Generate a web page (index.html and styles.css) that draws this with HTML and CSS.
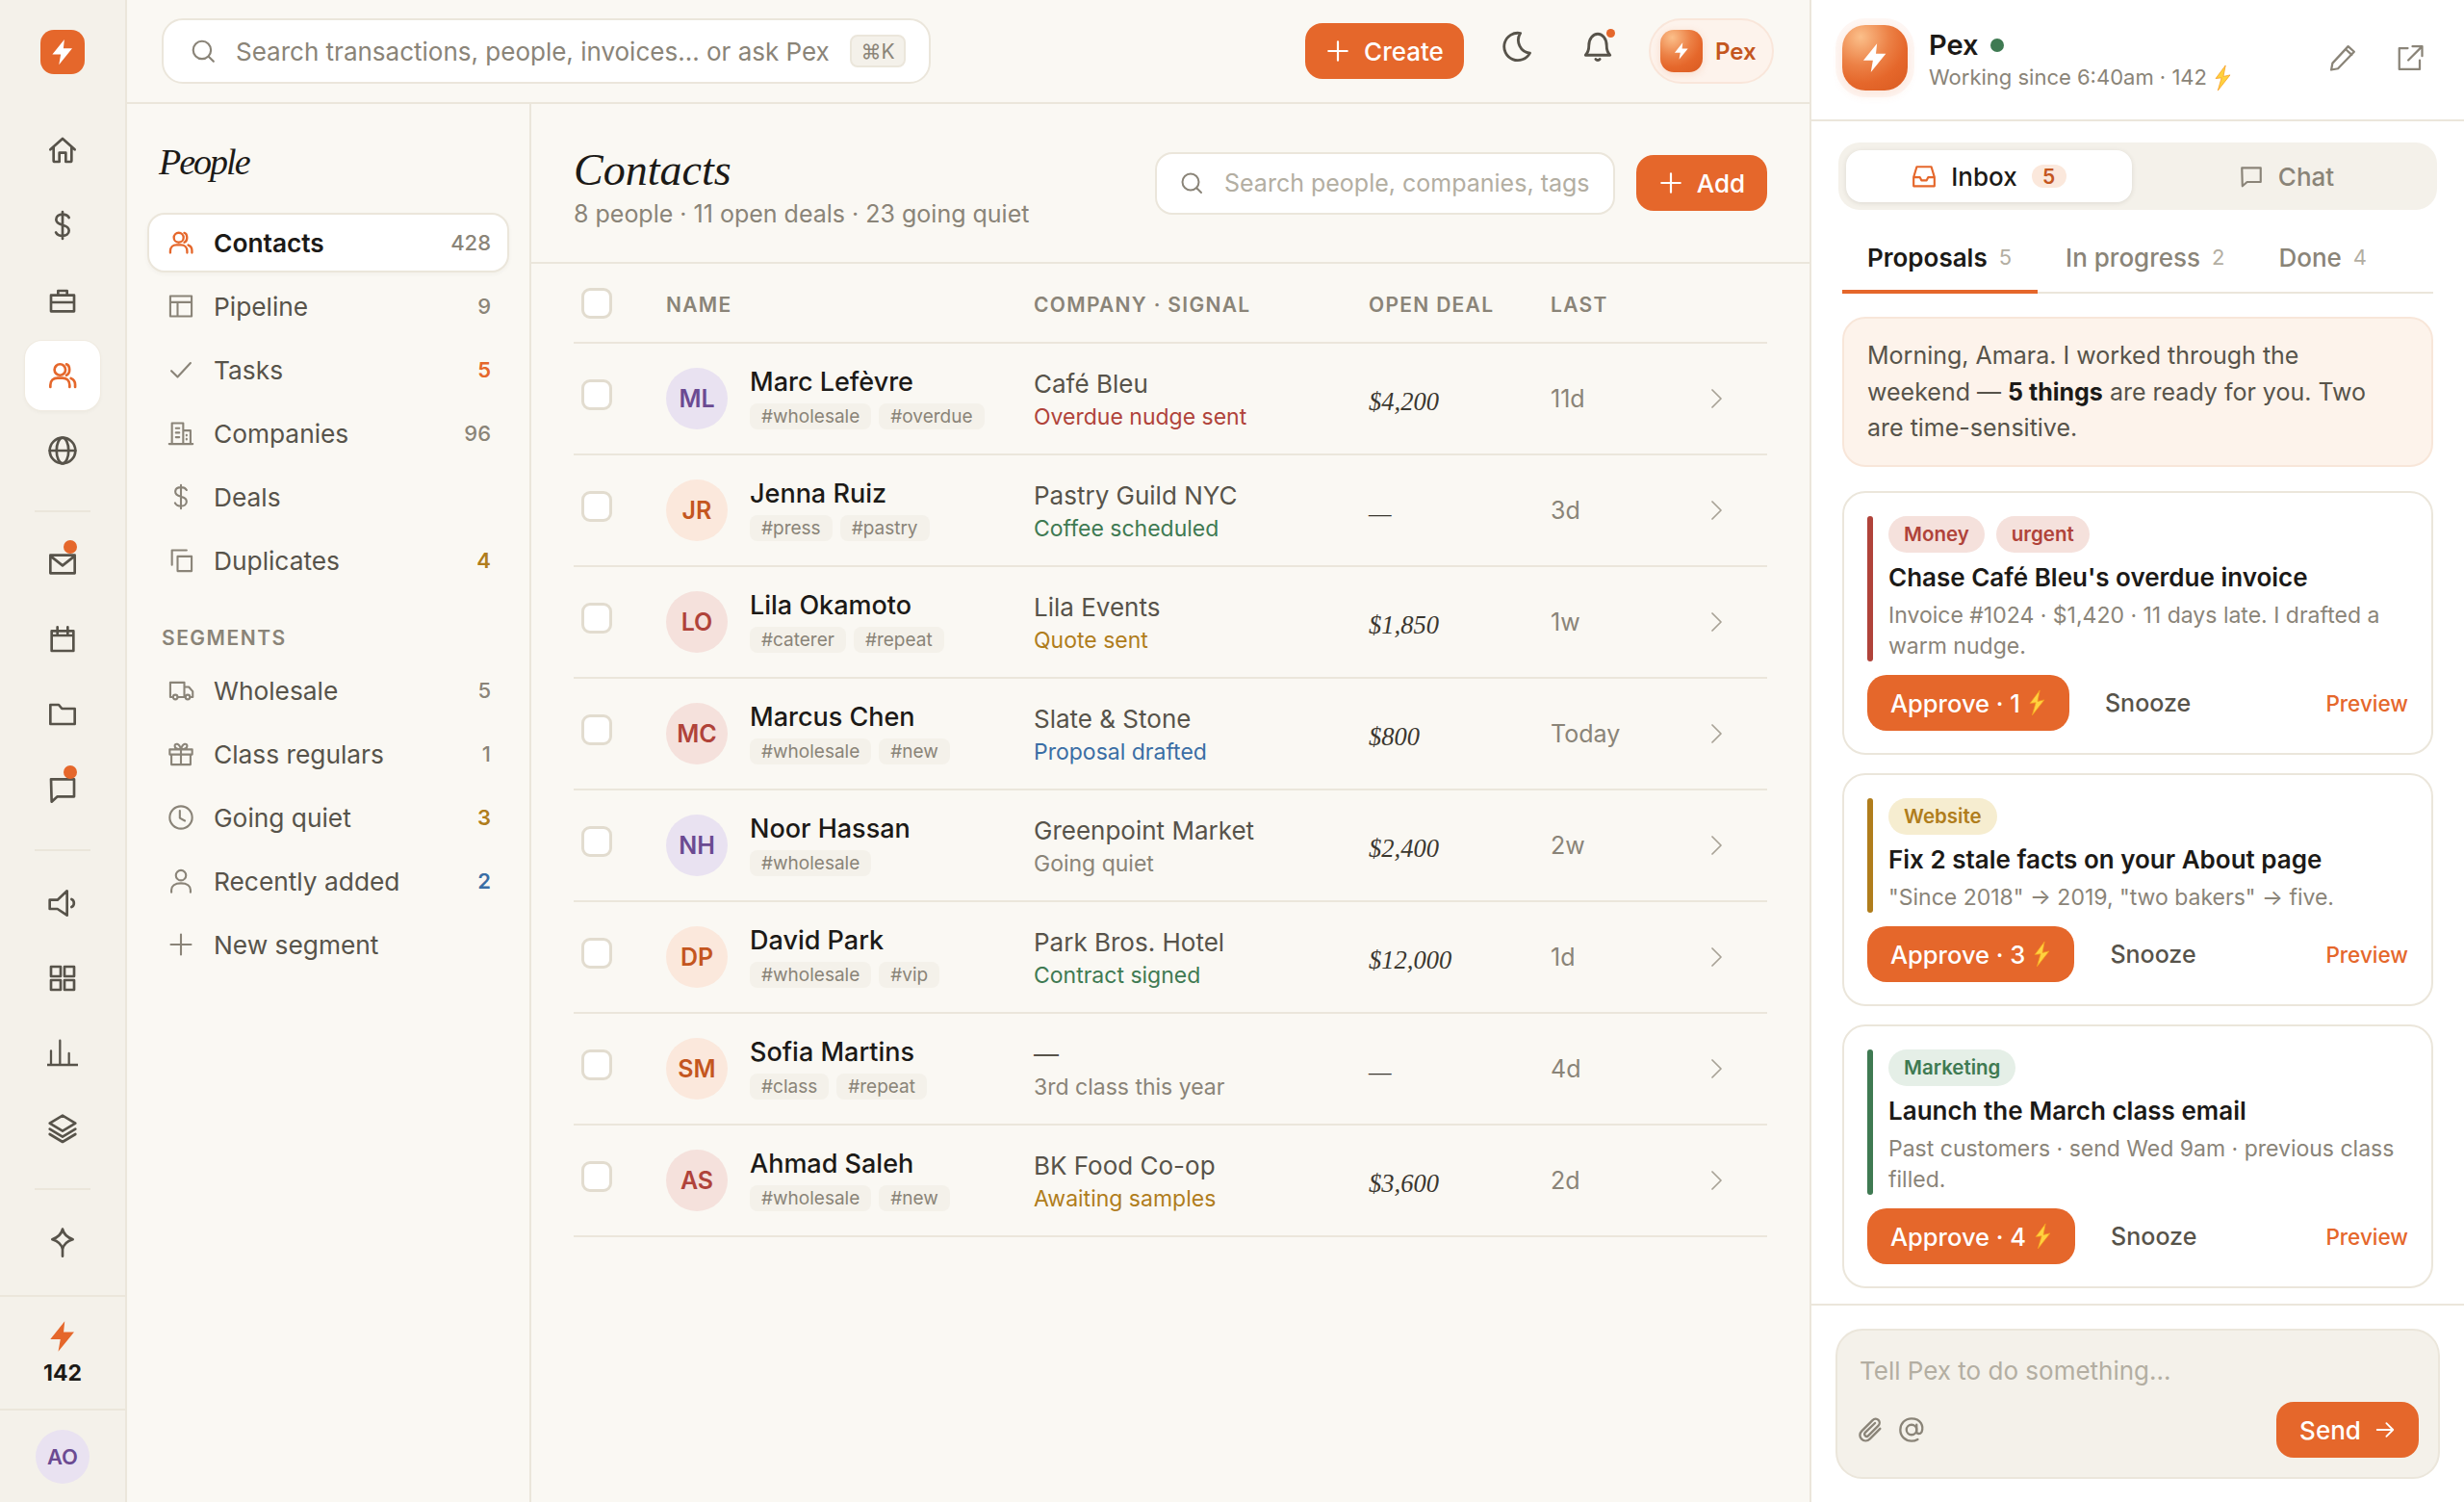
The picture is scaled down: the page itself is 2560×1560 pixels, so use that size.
FILE: index.html
```html
<!DOCTYPE html>
<html lang="en">
<head>
<meta charset="utf-8">
<title>Pex — Contacts</title>
<link rel="stylesheet" href="styles.css">
</head>
<body>
<svg class="sprite" xmlns="http://www.w3.org/2000/svg">
  <symbol id="bolt" viewBox="0 0 24 24"><path d="M13.5 1.5 3.5 14h7l-1.5 8.500 11-13.500h-7.300z"/></symbol>
  <symbol id="home" viewBox="0 0 24 24"><path d="M2.500 11.500 12 3l9.500 8.500M5 9.500V20a1 1 0 0 0 1 1h3.500v-7h5v7H18a1 1 0 0 0 1-1V9.500"/></symbol>
  <symbol id="dollar" viewBox="0 0 24 24"><path d="M12 1.500v21M17 6c-.8-1.500-2.800-2.500-5-2.500-3 0-5 1.500-5 4 0 2.600 2.300 3.600 5 4.300 2.800.7 5 1.800 5 4.400 0 2.500-2.200 4-5 4-2.400 0-4.300-1-5.200-2.700"/></symbol>
  <symbol id="case" viewBox="0 0 24 24"><path d="M3 8h18v12.500H3zM8.500 8V4.500h7V8M3 13.500h18"/></symbol>
  <symbol id="users" viewBox="0 0 24 24"><circle cx="10" cy="7.500" r="4.300"/><path d="M15 3.300c2.800.6 3.500 7 0 8.500M2.500 21v-1.500c0-3.500 2.500-5.500 5.500-5.500h4c3 0 5.500 2 5.500 5.500V21M18.500 14.200c2 .7 3.300 2.500 3.300 5V21"/></symbol>
  <symbol id="globe" viewBox="0 0 24 24"><circle cx="12" cy="12" r="10"/><ellipse cx="12" cy="12" rx="4.700" ry="10"/><path d="M2 12h20"/></symbol>
  <symbol id="mail" viewBox="0 0 24 24"><path d="M2.500 5h19v14h-19zM2.500 5.500 12 13l9.500-7.500"/></symbol>
  <symbol id="cal" viewBox="0 0 24 24"><path d="M3.500 5.500h17v15.500h-17zM8 2.500v5.500M16 2.500v5.500M3.500 9h17"/></symbol>
  <symbol id="folder" viewBox="0 0 24 24"><path d="M2.500 4.500H9l2.500 3h10v12h-19z"/></symbol>
  <symbol id="chat" viewBox="0 0 24 24"><path d="M3 4h18v13.500H8L3.500 21.500z"/></symbol>
  <symbol id="mega" viewBox="0 0 24 24"><path d="M15.500 2.500v19l-7.500-5H2v-7h6zM19 9c2.500 1 2.500 5 0 6"/></symbol>
  <symbol id="grid" viewBox="0 0 24 24"><path d="M3 3h7.500v7.500H3zM13.500 3H21v7.500h-7.500zM3 13.500h7.500V21H3zM13.500 13.500H21V21h-7.500z"/></symbol>
  <symbol id="bars" viewBox="0 0 24 24"><path d="M0 21h24M3 21V10M10 21V2M17 21v-9"/></symbol>
  <symbol id="layers" viewBox="0 0 24 24"><path d="m12 2 10 6-10 6L2 8zM2 12.500l10 6 10-6M2 16.500l10 6 10-6"/></symbol>
  <symbol id="spark" viewBox="0 0 24 24"><path d="M12 2c.9 4 3.200 6.200 8 8-4.800 1.500-7.100 3.600-8 7.500-.9-3.900-3.200-6-8-7.500 4.800-1.800 7.100-4 8-8zM12 17.500V23"/></symbol>
  <symbol id="search" viewBox="0 0 24 24"><circle cx="11" cy="11" r="8.500"/><path d="m17.500 17.500 4.500 4.500"/></symbol>
  <symbol id="plus" viewBox="0 0 24 24"><path d="M12 3v18M3 12h18"/></symbol>
  <symbol id="moon" viewBox="0 0 24 24"><path d="M14.500 2.500A10 10 0 1 0 21.500 17 9.500 9.500 0 0 1 14.500 2.500z"/></symbol>
  <symbol id="bell" viewBox="0 0 24 24"><path d="M3 18.500c1.800-1.700 2.500-3.500 2.500-7 0-5 3-8.500 6.500-8.500s6.500 3.500 6.500 8.500c0 3.500.7 5.300 2.500 7zM10.500 21.500c.7 1 2.300 1 3 0"/></symbol>
  <symbol id="layout" viewBox="0 0 24 24"><path d="M2.500 3h19v18h-19zM2.500 8.500h19M9 8.500V21"/></symbol>
  <symbol id="check" viewBox="0 0 24 24"><path d="m3.500 13 5.500 5.500L20.500 6"/></symbol>
  <symbol id="building" viewBox="0 0 24 24"><path d="M1.500 21.500h21M4 21.500V3h10v18.500M14 9.500h6.500v12M7.500 7.500h3M7.500 11.500h3M7.500 15.500h3M17 13.500v.5M17 17v.5"/></symbol>
  <symbol id="copy" viewBox="0 0 24 24"><path d="M9 8.500h12.500V21.500H9zM4 16V3h13"/></symbol>
  <symbol id="truck" viewBox="0 0 24 24"><path d="M5 18H2.500V5H15v13H9M15 9h4l3.500 4v5H20M15 18h1"/><circle cx="7" cy="18" r="2"/><circle cx="18" cy="18" r="2"/></symbol>
  <symbol id="gift" viewBox="0 0 24 24"><path d="M2 8h20v4.500H2zM3.500 12.500V21.500h17v-9M12 8v13.500M12 8C9 8 6.500 7 6.500 5c0-2.800 4-2.800 5.500 3zM12 8c3 0 5.500-1 5.500-3 0-2.800-4-2.800-5.500 3z"/></symbol>
  <symbol id="clock" viewBox="0 0 24 24"><circle cx="12" cy="12" r="10"/><path d="M11 6v6.500l4.500 2.500"/></symbol>
  <symbol id="user" viewBox="0 0 24 24"><circle cx="12" cy="7" r="4.500"/><path d="M3.500 22v-2c0-3.500 3-6 8.500-6s8.500 2.500 8.500 6v2"/></symbol>
  <symbol id="chev" viewBox="0 0 24 24"><path d="m8 3 9 9-9 9"/></symbol>
  <symbol id="pen" viewBox="0 0 24 24"><path d="M16.500 2.500 21.500 7 8 21l-5.500 1 1-5.500zM14.500 5l5 4.500"/></symbol>
  <symbol id="ext" viewBox="0 0 24 24"><path d="M10 4H3v17.500h17V14M14 2.500h8v8M22 2.500 10.500 14"/></symbol>
  <symbol id="inbox" viewBox="0 0 24 24"><path d="M5 3h14l3 10v8.500H2V13zM2 13h6l1.500 3h5l1.500-3h6"/></symbol>
  <symbol id="clip" viewBox="0 0 24 24"><path d="M20 11 11 20c-2.300 2.300-5.500 2.300-7.500.3s-2-5 .3-7.300l9.500-9.500c1.600-1.600 3.800-1.600 5.200-.2s1.400 3.600-.2 5.200L9.500 17.300c-.8.800-2 .8-2.800 0s-.8-2 0-2.800L15.500 6"/></symbol>
  <symbol id="at" viewBox="0 0 24 24"><circle cx="12" cy="12" r="4.500"/><path d="M16.500 7.500v6.200c0 2 3 2.500 4.500.3 2-5-.5-12-9-12C6 2 2 6.500 2 12c0 6 4.500 10 10 10 2.200 0 3.800-.5 5.500-1.500"/></symbol>
  <symbol id="arrow" viewBox="0 0 24 24"><path d="M3 12h18M13.500 4.500 21 12l-7.500 7.500"/></symbol>
  <symbol id="zap" viewBox="-1 -1 18 30"><path d="M10.900 0 0 14.600l6.500-.8L2.400 28 16 10.700l-7.500 1.600z"/></symbol>
</svg>

<aside class="rail">
  <div class="rail-logo"><svg class="fill-icon rail-logo-bolt"><use href="#bolt"/></svg></div>
  <nav class="rail-nav">
    <div class="rail-group">
      <a class="rail-item"><svg class="ic ic-rail"><use href="#home"/></svg></a>
      <a class="rail-item"><svg class="ic ic-rail"><use href="#dollar"/></svg></a>
      <a class="rail-item"><svg class="ic ic-rail"><use href="#case"/></svg></a>
      <a class="rail-item is-active"><svg class="ic ic-rail"><use href="#users"/></svg></a>
      <a class="rail-item"><svg class="ic ic-rail"><use href="#globe"/></svg></a>
    </div>
    <div class="rail-divider"></div>
    <div class="rail-group">
      <a class="rail-item has-dot"><svg class="ic ic-rail"><use href="#mail"/></svg></a>
      <a class="rail-item"><svg class="ic ic-rail"><use href="#cal"/></svg></a>
      <a class="rail-item"><svg class="ic ic-rail"><use href="#folder"/></svg></a>
      <a class="rail-item has-dot"><svg class="ic ic-rail"><use href="#chat"/></svg></a>
    </div>
    <div class="rail-divider"></div>
    <div class="rail-group">
      <a class="rail-item"><svg class="ic ic-rail"><use href="#mega"/></svg></a>
      <a class="rail-item"><svg class="ic ic-rail"><use href="#grid"/></svg></a>
      <a class="rail-item"><svg class="ic ic-rail ic-thin"><use href="#bars"/></svg></a>
      <a class="rail-item"><svg class="ic ic-rail"><use href="#layers"/></svg></a>
    </div>
    <div class="rail-divider"></div>
    <div class="rail-group">
      <a class="rail-item"><svg class="ic ic-rail"><use href="#spark"/></svg></a>
    </div>
  </nav>
  <div class="rail-credits">
    <svg class="fill-icon credits-bolt"><use href="#bolt"/></svg>
    <span class="credits-num">142</span>
  </div>
  <div class="rail-me"><span class="avatar avatar-me tone-purple">AO</span></div>
</aside>

<div class="workspace">
  <header class="topbar">
    <div class="global-search">
      <svg class="ic ic-search"><use href="#search"/></svg>
      <span class="global-search-text">Search transactions, people, invoices... or ask Pex</span>
      <kbd class="kbd">⌘K</kbd>
    </div>
    <div class="topbar-actions">
      <button class="btn btn-create"><svg class="ic ic-plus"><use href="#plus"/></svg>Create</button>
      <button class="icon-btn icon-moon"><svg class="ic ic-top"><use href="#moon"/></svg></button>
      <button class="icon-btn icon-bell"><svg class="ic ic-top"><use href="#bell"/></svg><span class="bell-dot"></span></button>
      <div class="pex-pill">
        <span class="orb orb-small"><svg class="fill-icon orb-bolt-small"><use href="#bolt"/></svg></span>
        <span class="pex-pill-name">Pex</span>
      </div>
    </div>
  </header>

  <div class="content">
    <aside class="subnav">
      <h2 class="subnav-title">People</h2>
      <ul class="subnav-list">
        <li class="subnav-item is-active"><svg class="ic ic-sub"><use href="#users"/></svg><span class="subnav-label">Contacts</span><span class="count">428</span></li>
        <li class="subnav-item"><svg class="ic ic-sub"><use href="#layout"/></svg><span class="subnav-label">Pipeline</span><span class="count">9</span></li>
        <li class="subnav-item"><svg class="ic ic-sub"><use href="#check"/></svg><span class="subnav-label">Tasks</span><span class="count count-orange">5</span></li>
        <li class="subnav-item"><svg class="ic ic-sub"><use href="#building"/></svg><span class="subnav-label">Companies</span><span class="count">96</span></li>
        <li class="subnav-item"><svg class="ic ic-sub"><use href="#dollar"/></svg><span class="subnav-label">Deals</span></li>
        <li class="subnav-item"><svg class="ic ic-sub"><use href="#copy"/></svg><span class="subnav-label">Duplicates</span><span class="count count-amber">4</span></li>
      </ul>
      <div class="subnav-heading">SEGMENTS</div>
      <ul class="subnav-list">
        <li class="subnav-item"><svg class="ic ic-sub"><use href="#truck"/></svg><span class="subnav-label">Wholesale</span><span class="count">5</span></li>
        <li class="subnav-item"><svg class="ic ic-sub"><use href="#gift"/></svg><span class="subnav-label">Class regulars</span><span class="count">1</span></li>
        <li class="subnav-item"><svg class="ic ic-sub"><use href="#clock"/></svg><span class="subnav-label">Going quiet</span><span class="count count-amber">3</span></li>
        <li class="subnav-item"><svg class="ic ic-sub"><use href="#user"/></svg><span class="subnav-label">Recently added</span><span class="count count-blue">2</span></li>
        <li class="subnav-item"><svg class="ic ic-sub"><use href="#plus"/></svg><span class="subnav-label">New segment</span></li>
      </ul>
    </aside>

    <main class="main">
      <div class="page-head">
        <div class="page-titles">
          <h1 class="page-title">Contacts</h1>
          <p class="page-sub">8 people · 11 open deals · 23 going quiet</p>
        </div>
        <div class="page-tools">
          <div class="page-search">
            <svg class="ic ic-search-small"><use href="#search"/></svg>
            <span>Search people, companies, tags</span>
          </div>
          <button class="btn btn-add"><svg class="ic ic-plus"><use href="#plus"/></svg>Add</button>
        </div>
      </div>

      <div class="table">
        <div class="row row-head">
          <span class="box box-head"></span>
          <span>NAME</span>
          <span>COMPANY · SIGNAL</span>
          <span>OPEN DEAL</span>
          <span>LAST</span>
          <span></span>
        </div>

        <div class="row">
          <span class="box"></span>
          <div class="person"><span class="avatar tone-purple">ML</span><div class="person-text"><div class="person-name">Marc Lefèvre</div><div class="tags"><span class="tag">#wholesale</span><span class="tag">#overdue</span></div></div></div>
          <div><div class="company">Café Bleu</div><div class="signal sig-red">Overdue nudge sent</div></div>
          <div class="deal">$4,200</div>
          <div class="last">11d</div>
          <svg class="ic ic-chev"><use href="#chev"/></svg>
        </div>

        <div class="row">
          <span class="box"></span>
          <div class="person"><span class="avatar tone-orange">JR</span><div class="person-text"><div class="person-name">Jenna Ruiz</div><div class="tags"><span class="tag">#press</span><span class="tag">#pastry</span></div></div></div>
          <div><div class="company">Pastry Guild NYC</div><div class="signal sig-green">Coffee scheduled</div></div>
          <div class="deal">—</div>
          <div class="last">3d</div>
          <svg class="ic ic-chev"><use href="#chev"/></svg>
        </div>

        <div class="row">
          <span class="box"></span>
          <div class="person"><span class="avatar tone-red">LO</span><div class="person-text"><div class="person-name">Lila Okamoto</div><div class="tags"><span class="tag">#caterer</span><span class="tag">#repeat</span></div></div></div>
          <div><div class="company">Lila Events</div><div class="signal sig-amber">Quote sent</div></div>
          <div class="deal">$1,850</div>
          <div class="last">1w</div>
          <svg class="ic ic-chev"><use href="#chev"/></svg>
        </div>

        <div class="row">
          <span class="box"></span>
          <div class="person"><span class="avatar tone-red">MC</span><div class="person-text"><div class="person-name">Marcus Chen</div><div class="tags"><span class="tag">#wholesale</span><span class="tag">#new</span></div></div></div>
          <div><div class="company">Slate &amp; Stone</div><div class="signal sig-blue">Proposal drafted</div></div>
          <div class="deal">$800</div>
          <div class="last">Today</div>
          <svg class="ic ic-chev"><use href="#chev"/></svg>
        </div>

        <div class="row">
          <span class="box"></span>
          <div class="person"><span class="avatar tone-purple">NH</span><div class="person-text"><div class="person-name">Noor Hassan</div><div class="tags"><span class="tag">#wholesale</span></div></div></div>
          <div><div class="company">Greenpoint Market</div><div class="signal sig-muted">Going quiet</div></div>
          <div class="deal">$2,400</div>
          <div class="last">2w</div>
          <svg class="ic ic-chev"><use href="#chev"/></svg>
        </div>

        <div class="row">
          <span class="box"></span>
          <div class="person"><span class="avatar tone-orange">DP</span><div class="person-text"><div class="person-name">David Park</div><div class="tags"><span class="tag">#wholesale</span><span class="tag">#vip</span></div></div></div>
          <div><div class="company">Park Bros. Hotel</div><div class="signal sig-green">Contract signed</div></div>
          <div class="deal">$12,000</div>
          <div class="last">1d</div>
          <svg class="ic ic-chev"><use href="#chev"/></svg>
        </div>

        <div class="row">
          <span class="box"></span>
          <div class="person"><span class="avatar tone-orange">SM</span><div class="person-text"><div class="person-name">Sofia Martins</div><div class="tags"><span class="tag">#class</span><span class="tag">#repeat</span></div></div></div>
          <div><div class="company">—</div><div class="signal sig-muted">3rd class this year</div></div>
          <div class="deal">—</div>
          <div class="last">4d</div>
          <svg class="ic ic-chev"><use href="#chev"/></svg>
        </div>

        <div class="row">
          <span class="box"></span>
          <div class="person"><span class="avatar tone-red">AS</span><div class="person-text"><div class="person-name">Ahmad Saleh</div><div class="tags"><span class="tag">#wholesale</span><span class="tag">#new</span></div></div></div>
          <div><div class="company">BK Food Co-op</div><div class="signal sig-amber">Awaiting samples</div></div>
          <div class="deal">$3,600</div>
          <div class="last">2d</div>
          <svg class="ic ic-chev"><use href="#chev"/></svg>
        </div>
      </div>
    </main>
  </div>
</div>

<aside class="panel">
  <header class="panel-head">
    <span class="orb orb-large"><svg class="fill-icon orb-bolt-large"><use href="#bolt"/></svg></span>
    <div class="panel-id">
      <div class="panel-name">Pex <span class="online"></span></div>
      <div class="panel-status">Working since 6:40am · 142 <svg class="zap zap-status"><use href="#zap"/></svg></div>
    </div>
    <button class="icon-btn"><svg class="ic ic-panel"><use href="#pen"/></svg></button>
    <button class="icon-btn"><svg class="ic ic-panel"><use href="#ext"/></svg></button>
  </header>

  <div class="seg">
    <div class="seg-item is-active"><svg class="ic ic-seg"><use href="#inbox"/></svg>Inbox<span class="seg-badge">5</span></div>
    <div class="seg-item"><svg class="ic ic-seg"><use href="#chat"/></svg>Chat</div>
  </div>

  <div class="tabs">
    <div class="tab is-active">Proposals<span class="tab-num">5</span></div>
    <div class="tab">In progress<span class="tab-num">2</span></div>
    <div class="tab">Done<span class="tab-num">4</span></div>
  </div>

  <div class="feed">
    <div class="note">Morning, Amara. I worked through the weekend — <strong>5 things</strong> are ready for you. Two are time-sensitive.</div>

    <article class="card">
      <div class="card-top">
        <span class="accent accent-red"></span>
        <div class="card-body">
          <div class="pills"><span class="pill pill-red">Money</span><span class="pill pill-red">urgent</span></div>
          <h3 class="card-title">Chase Café Bleu's overdue invoice</h3>
          <p class="card-desc">Invoice #1024 · $1,420 · 11 days late. I drafted a warm nudge.</p>
        </div>
      </div>
      <div class="card-actions">
        <button class="btn btn-approve">Approve · 1 <svg class="zap zap-btn"><use href="#zap"/></svg></button>
        <span class="snooze">Snooze</span>
        <span class="preview">Preview</span>
      </div>
    </article>

    <article class="card">
      <div class="card-top">
        <span class="accent accent-amber"></span>
        <div class="card-body">
          <div class="pills"><span class="pill pill-amber">Website</span></div>
          <h3 class="card-title">Fix 2 stale facts on your About page</h3>
          <p class="card-desc">"Since 2018" → 2019, "two bakers" → five.</p>
        </div>
      </div>
      <div class="card-actions">
        <button class="btn btn-approve">Approve · 3 <svg class="zap zap-btn"><use href="#zap"/></svg></button>
        <span class="snooze">Snooze</span>
        <span class="preview">Preview</span>
      </div>
    </article>

    <article class="card">
      <div class="card-top">
        <span class="accent accent-green"></span>
        <div class="card-body">
          <div class="pills"><span class="pill pill-green">Marketing</span></div>
          <h3 class="card-title">Launch the March class email</h3>
          <p class="card-desc">Past customers · send Wed 9am · previous class filled.</p>
        </div>
      </div>
      <div class="card-actions">
        <button class="btn btn-approve">Approve · 4 <svg class="zap zap-btn"><use href="#zap"/></svg></button>
        <span class="snooze">Snooze</span>
        <span class="preview">Preview</span>
      </div>
    </article>
  </div>

  <footer class="composer-wrap">
    <div class="composer">
      <div class="composer-text">Tell Pex to do something...</div>
      <div class="composer-bar">
        <svg class="ic ic-comp"><use href="#clip"/></svg>
        <svg class="ic ic-comp"><use href="#at"/></svg>
        <button class="btn btn-send">Send<svg class="ic ic-arrow"><use href="#arrow"/></svg></button>
      </div>
    </div>
  </footer>
</aside>
</body>
</html>
```
FILE: styles.css
```css
* { box-sizing: border-box; }
html, body { margin: 0; height: 100%; }
body {
  display: flex;
  height: 1560px;
  overflow: hidden;
  background: #faf8f3;
  color: #1c1a17;
  font-family: "Inter", "Liberation Sans", sans-serif;
  font-size: 26px;
}
button { font-family: inherit; border: 0; background: none; padding: 0; }
ul { list-style: none; margin: 0; padding: 0; }
h1, h2, h3, p { margin: 0; }
.sprite { position: absolute; width: 0; height: 0; }

.ic { fill: none; stroke: currentColor; stroke-width: 2; stroke-linecap: round; stroke-linejoin: round; flex: none; }
.fill-icon { fill: currentColor; flex: none; }

/* rail */
.rail {
  flex: none;
  width: 132px;
  display: flex;
  flex-direction: column;
  background: #f4f1ea;
  border-right: 2px solid #ebe6db;
  color: #57534a;
}
.rail-logo {
  width: 46px;
  height: 46px;
  margin: 31px 0 0 42px;
  border-radius: 14px;
  background: #e5672b;
  display: flex;
  align-items: center;
  justify-content: center;
  color: #fff;
}
.rail-logo-bolt { width: 30px; height: 36px; }
.rail-nav { padding-top: 43px; }
.rail-group { display: flex; flex-direction: column; gap: 6px; align-items: center; }
.rail-item {
  position: relative;
  width: 78px;
  height: 72px;
  display: flex;
  align-items: center;
  justify-content: center;
  border-radius: 18px;
}
.rail-item.is-active {
  background: #fff;
  color: #e5672b;
  box-shadow: 0 0 0 1px #f0ebe1, 0 2px 4px rgba(60, 50, 30, .05);
}
.rail-item.has-dot::after {
  content: "";
  position: absolute;
  top: 11px;
  right: 24px;
  width: 14px;
  height: 14px;
  border-radius: 50%;
  background: #e5672b;
}
.ic-rail { width: 32px; height: 32px; }
.ic-thin { stroke-width: 1.700; }
.rail-divider { height: 2px; width: 58px; margin: 26px 0 18px 36px; background: #ebe6db; }
.rail-credits {
  margin-top: auto;
  height: 120px;
  border-top: 2px solid #ebe6db;
  border-bottom: 2px solid #ebe6db;
  display: flex;
  flex-direction: column;
  align-items: center;
  justify-content: center;
  color: #e5672b;
  gap: 6px;
}
.credits-bolt { width: 36px; height: 36px; }
.credits-num { font-size: 23px; font-weight: 700; color: #1c1a17; line-height: 28px; }
.rail-me { height: 95px; display: flex; align-items: center; justify-content: center; }

.avatar {
  flex: none;
  width: 64px;
  height: 64px;
  border-radius: 50%;
  display: flex;
  align-items: center;
  justify-content: center;
  font-size: 25px;
  font-weight: 600;
}
.avatar-me { width: 56px; height: 56px; font-size: 22px; }
.tone-purple { background: #e9e2f1; color: #6b4a92; }
.tone-orange { background: #fbe8dc; color: #c4561f; }
.tone-red { background: #f5e1dc; color: #b0433a; }

/* workspace */
.workspace { flex: none; width: 1748px; display: flex; flex-direction: column; }
.topbar {
  flex: none;
  height: 108px;
  border-bottom: 2px solid #ebe6db;
  padding: 0 37px 0 36px;
  display: flex;
  align-items: center;
  justify-content: space-between;
}
.global-search {
  width: 799px;
  height: 68px;
  background: #fff;
  border: 2px solid #ebe6db;
  border-radius: 22px;
  display: flex;
  align-items: center;
  padding: 0 24px 0 28px;
  color: #8a8478;
}
.ic-search { width: 26px; height: 26px; margin-right: 21px; }
.global-search-text { flex: 1; font-size: 26px; white-space: nowrap; }
.kbd {
  width: 58px;
  height: 34px;
  border: 2px solid #ebe6db;
  background: #f4f1ea;
  border-radius: 8px;
  font-family: "Inter", "DejaVu Sans", sans-serif;
  font-size: 21px;
  display: flex;
  align-items: center;
  justify-content: center;
}
.topbar-actions { display: flex; align-items: center; }
.btn {
  display: inline-flex;
  align-items: center;
  justify-content: center;
  background: #e5672b;
  color: #fff;
  height: 58px;
  border-radius: 18px;
  font-weight: 500;
  font-size: 26px;
  white-space: nowrap;
}
.btn-create { width: 165px; gap: 14px; margin-right: 38px; }
.ic-plus { width: 26px; height: 26px; stroke-width: 2; }
.icon-btn { position: relative; display: flex; align-items: center; justify-content: center; color: #57534a; }
.icon-moon { margin-right: 50px; }
.icon-bell { margin-right: 36px; }
.icon-moon, .icon-bell { margin-top: -11px; }
.ic-top { width: 34px; height: 34px; }
.bell-dot {
  position: absolute;
  top: -1px;
  right: -1px;
  width: 9px;
  height: 9px;
  border-radius: 50%;
  background: #e5672b;
}
.pex-pill {
  width: 130px;
  height: 68px;
  border-radius: 34px;
  background: #fdf3ec;
  border: 2px solid #f9e6da;
  display: flex;
  align-items: center;
  padding-left: 10px;
  gap: 13px;
}
.pex-pill-name { font-size: 24px; font-weight: 600; color: #c4561f; }
.orb {
  flex: none;
  display: flex;
  align-items: center;
  justify-content: center;
  background: radial-gradient(circle at 28% 18%, #fbbf8a 0%, #ec8146 40%, #e5672b 65%, #d95a20 100%);
  color: #fff;
}
.orb-small { width: 44px; height: 44px; border-radius: 14px; box-shadow: 0 2px 8px rgba(229, 103, 43, .18); }
.orb-bolt-small { width: 20px; height: 26px; }
.orb-large { width: 68px; height: 68px; border-radius: 24px; box-shadow: 0 0 0 7px rgba(229, 103, 43, .05), 0 4px 12px rgba(229, 103, 43, .12); }
.orb-bolt-large { width: 34px; height: 40px; }

.content { flex: 1; display: flex; min-height: 0; }

/* subnav */
.subnav {
  flex: none;
  width: 420px;
  border-right: 2px solid #ebe6db;
  padding: 30px 21px 0 21px;
}
.subnav-title {
  font-family: "Liberation Serif", serif;
  font-style: italic;
  font-weight: 400;
  font-size: 38px;
  line-height: 60px;
  letter-spacing: -2px;
  padding-left: 12px;
  margin-bottom: 23px;
}
.subnav-list { display: flex; flex-direction: column; gap: 4px; }
.subnav-item {
  height: 62px;
  display: flex;
  align-items: center;
  padding: 0 17px 0 19px;
  border: 2px solid transparent;
  border-radius: 18px;
  color: #57534a;
  font-size: 26.300px;
}
.subnav-item.is-active {
  background: #fff;
  border-color: #ebe6db;
  color: #1c1a17;
  font-weight: 600;
  box-shadow: 0 2px 4px rgba(60, 50, 30, .04);
}
.ic-sub { width: 28px; height: 28px; margin-right: 20px; color: #8a8478; stroke-width: 1.800; }
.is-active .ic-sub { color: #e5672b; stroke-width: 2; }
.subnav-label { flex: 1; }
.count { font-size: 22px; font-weight: 500; color: #8a8478; }
.is-active .count { font-weight: 500; }
.count-orange { color: #e5672b; font-weight: 600; }
.count-amber { color: #b07d1c; font-weight: 600; }
.count-blue { color: #3a6ea5; font-weight: 600; }
.subnav-heading {
  font-size: 21px;
  font-weight: 600;
  letter-spacing: 1.500px;
  color: #8a8478;
  line-height: 36px;
  margin: 32px 0 5px 15px;
}

/* main */
.main { flex: 1; min-width: 0; display: flex; flex-direction: column; }
.page-head {
  flex: none;
  height: 166px;
  border-bottom: 2px solid #ebe6db;
  padding: 0 44px;
  display: flex;
  align-items: center;
  justify-content: space-between;
}
.page-titles { padding-top: 6px; }
.page-title {
  font-family: "Liberation Serif", serif;
  font-style: italic;
  font-weight: 400;
  font-size: 46px;
  line-height: 54px;
  padding-top: 4px;
}
.page-sub { font-size: 25px; line-height: 36px; color: #8a8478; }
.page-tools { display: flex; align-items: center; gap: 22px; }
.page-search {
  width: 478px;
  height: 65px;
  background: #fff;
  border: 2px solid #ebe6db;
  border-radius: 18px;
  display: flex;
  align-items: center;
  padding-left: 24px;
  gap: 22px;
  font-size: 25px;
  color: #b3aea2;
  white-space: nowrap;
}
.ic-search-small { width: 24px; height: 26px; color: #8a8478; }
.btn-add { width: 136px; gap: 14px; }

.row {
  display: grid;
  grid-template-columns: 96px 382px 348px 189px 1fr 62px;
  align-items: center;
  height: 116px;
  border-bottom: 2px solid #ebe6db;
}
.row-head {
  height: 83px;
  font-size: 21px;
  font-weight: 600;
  letter-spacing: 1.300px;
  color: #8a8478;
  padding-top: 3px;
}
.table { padding: 0 44px; }
.box {
  display: block;
  width: 32px;
  height: 32px;
  margin: 0 0 8px 8px;
  background: #fff;
  border: 3px solid #e2dccf;
  border-radius: 9px;
}
.box-head { margin: -3px 0 0 8px; }
.person { display: flex; align-items: center; gap: 23px; }
.person-text { padding-bottom: 3px; }
.person-name { font-size: 27px; font-weight: 500; line-height: 36px; }
.tags { display: flex; gap: 8px; margin-top: 4px; }
.tag {
  height: 27px;
  padding: 0 12px;
  border-radius: 8px;
  background: #f4f1ea;
  color: #8a8478;
  font-size: 19px;
  line-height: 27px;
}
.company { font-size: 26px; line-height: 36px; color: #57534a; padding-top: 1px; }
.signal { font-size: 23px; line-height: 32px; }
.sig-red { color: #b0433a; }
.sig-green { color: #3f7a52; }
.sig-amber { color: #b07d1c; }
.sig-blue { color: #3a6ea5; }
.sig-muted { color: #8a8478; }
.deal {
  font-family: "Liberation Serif", serif;
  font-style: italic;
  font-size: 26.500px;
  color: #3a372f;
  padding-top: 6px;
}
.last { font-size: 25px; color: #8a8478; }
.ic-chev { width: 24px; height: 24px; margin-left: -3px; color: #a8a296; stroke-width: 1.700; }

/* panel */
.panel { flex: none; width: 680px; background: #fff; border-left: 2px solid #ebe6db; display: flex; flex-direction: column; }
.panel-head {
  flex: none;
  height: 126px;
  border-bottom: 2px solid #ebe6db;
  display: flex;
  align-items: center;
  padding: 0 41px 4px 32px;
}
.panel-id { flex: 1; margin-left: 22px; }
.panel-name { font-size: 29px; font-weight: 600; line-height: 36px; display: flex; align-items: center; gap: 12px; padding-top: 5px; }
.online { width: 14px; height: 14px; border-radius: 50%; background: #3f7a52; }
.panel-status { font-size: 22px; line-height: 31px; color: #8a8478; display: flex; align-items: center; gap: 8px; }
.zap { flex: none; fill: #ffd23f; stroke: #f59a1f; stroke-width: .8; stroke-linejoin: round; }
.zap-status { width: 17px; height: 28px; }
.zap-btn { width: 17px; height: 28px; margin-left: 9px; }
.ic-panel { width: 30px; height: 30px; color: #8a8478; stroke-width: 1.800; margin-left: 40px; }

.seg {
  flex: none;
  height: 70px;
  margin: 22px 28px 0;
  background: #f4f1ea;
  border-radius: 22px;
  padding: 8px;
  display: flex;
  gap: 12px;
}
.seg-item {
  flex: 1;
  display: flex;
  align-items: center;
  justify-content: center;
  gap: 15px;
  border-radius: 16px;
  font-size: 26px;
  font-weight: 500;
  color: #8a8478;
}
.seg-item.is-active { background: #fff; color: #1c1a17; box-shadow: 0 1px 5px rgba(60, 50, 30, .12); }
.ic-seg { width: 26px; height: 26px; stroke-width: 2; }
.is-active .ic-seg { color: #e5672b; }
.seg-badge {
  min-width: 36px;
  height: 24px;
  border-radius: 12px;
  background: #fbe8dc;
  color: #c4561f;
  font-size: 21px;
  font-weight: 600;
  display: flex;
  align-items: center;
  justify-content: center;
}
.tabs {
  flex: none;
  height: 87px;
  margin: 0 32px;
  border-bottom: 2px solid #ebe6db;
  display: flex;
  gap: 3px;
}
.tab {
  padding: 15px 27px 0 26px;
  height: 87px;
  font-size: 26px;
  font-weight: 500;
  color: #8a8478;
  display: flex;
  align-items: center;
  gap: 12px;
  border-bottom: 4px solid transparent;
  white-space: nowrap;
}
.tab.is-active { color: #1c1a17; font-weight: 600; border-bottom-color: #e5672b; }
.tab-num { font-size: 22px; font-weight: 400; color: #b3aea2; }

.feed { flex: 1; min-height: 0; padding: 24px 32px 0; display: flex; flex-direction: column; gap: 19px; overflow: hidden; }
.note {
  flex: none;
  height: 156px;
  background: #fdf3eb;
  border: 2px solid #f8e6d9;
  border-radius: 24px;
  padding: 20px 24px;
  font-size: 25px;
  line-height: 37.700px;
  color: #57534a;
  margin-bottom: 6px;
}
.note strong { font-weight: 700; color: #1c1a17; }
.card {
  flex: none;
  border: 2px solid #ebe6db;
  border-radius: 24px;
  padding: 24px 24px 23px;
  background: #fff;
}
.card-top { display: flex; gap: 16px; }
.accent { flex: none; width: 6px; border-radius: 3px; }
.accent-red { background: #b0433a; }
.accent-amber { background: #b07d1c; }
.accent-green { background: #3f7a52; }
.card-body { flex: 1; min-width: 0; }
.pills { display: flex; gap: 12px; }
.pill {
  height: 38px;
  padding: 0 16px;
  border-radius: 19px;
  font-size: 20.500px;
  font-weight: 600;
  line-height: 38px;
}
.pill-red { background: #f5e1dc; color: #b0433a; }
.pill-amber { background: #f6edd0; color: #b07d1c; }
.pill-green { background: #e5efe7; color: #3f7a52; }
.card-title { font-size: 26px; font-weight: 600; line-height: 36px; margin-top: 8px; }
.card-desc { font-size: 23px; line-height: 32px; color: #8a8478; margin-top: 5px; }
.card-actions { display: flex; align-items: center; margin-top: 14px; }
.btn-approve { padding: 0 25px 0 24px; font-size: 25.500px; border-radius: 20px; }
.snooze { margin-left: 37px; font-size: 25px; font-weight: 500; color: #57534a; }
.preview { margin-left: auto; font-size: 22.500px; font-weight: 500; color: #e5672b; }

.composer-wrap { flex: none; height: 206px; border-top: 2px solid #ebe6db; padding: 24px 25px 0; }
.composer {
  height: 156px;
  background: #f4f1ea;
  border: 2px solid #ebe6db;
  border-radius: 28px;
  padding: 24px 20px 0 23px;
}
.composer-text { font-size: 26px; line-height: 36px; color: #b3aea2; }
.composer-bar { display: flex; align-items: center; gap: 14px; margin-top: 14px; margin-left: -2px; color: #8a8478; }
.ic-comp { width: 28px; height: 28px; }
.btn-send { margin-left: auto; width: 148px; gap: 14px; }
.ic-arrow { width: 22px; height: 22px; }
```
